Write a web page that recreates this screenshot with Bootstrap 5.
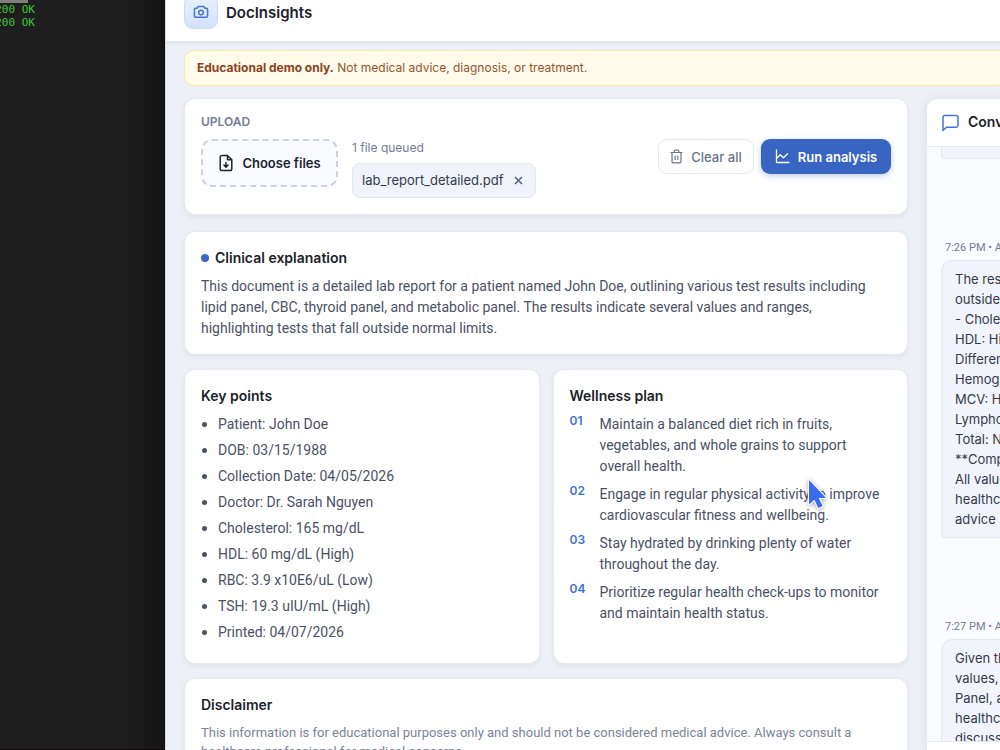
<!DOCTYPE html>
<html lang="en">
<head>
<meta charset="utf-8">
<meta name="viewport" content="width=device-width, initial-scale=1">
<title>DocInsights</title>
<link href="https://cdn.jsdelivr.net/npm/bootstrap@5.3.0/dist/css/bootstrap.min.css" rel="stylesheet">
<style>
  body { font-family: Inter, "Open Sans", sans-serif; font-size: 14px; line-height: 21px; color: #4a5164; background: #1e1e1e; }
  .panel .prose { font-family: Roboto, Inter, sans-serif; padding-right: 6px; }
  .terminal { width: 165px; background: linear-gradient(90deg, #1e1e1e 75%, #141414); font: 11px/13px "DejaVu Sans Mono", monospace; color: #3fc43f; border-bottom: 1px solid #0d0507; }
  .log-lines { width: 35px; margin-top: -10px; }
  .log-lines .picked { background: #7d7f7d; color: #a9b5a9; margin-right: 7px; }
  .app { background: #edf0f6; border-left: 1px solid #d5d7de; min-width: 0; }
  .topbar { height: 42px; padding: 0 18px 12px; background: #fff; border-bottom: 1px solid #dfe3eb; box-shadow: 0 1px 4px #1c2b500f; }
  .logo { width: 34px; height: 34px; border-radius: 9px; border: 1px solid #cbd9f3; background: linear-gradient(#e9f0fd, #d3e1fa); color: #4575cf; }
  .brand { font-size: 15px; line-height: 24px; font-weight: 600; color: #1c202b; padding-bottom: 4px; }
  .notice { margin: 8px 0 12px 18px; padding: 7px 12px; font-size: 12px; line-height: 20px; color: #95542f; background: #fffbea; border: 1px solid #f6e8ac; border-right: 0; border-radius: 10px 0 0 10px; }
  .notice strong { color: #8b4220; }
  .workspace { display: grid; grid-template-columns: minmax(0, 1fr) 74px; gap: 18px; padding-left: 18px; min-height: 0; }
  .stack { gap: 14px; min-height: 0; }
  .panel { flex: none; background: #fff; border: 1px solid #e6e9f0; border-radius: 11px; padding: 15px 16px; box-shadow: 0 2px 5px #23365c12; }
  .upload { padding-bottom: 16px; margin-bottom: 2px; }
  .panel h2 { font-size: 14px; line-height: 22px; font-weight: 600; color: #1b1f2a; margin: 0 0 7px; }
  .panel-pair { display: grid; grid-template-columns: 1fr 1fr; gap: 13px; }
  .eyebrow { font-size: 12px; line-height: 16px; font-weight: 600; color: #727c92; margin: 0 0 9px; }
  .choose { height: 48px; width: 137px; border: 2px dashed #ccd2df; border-radius: 11px; background: #f9fafd; color: #20232d; font-size: 13px; font-weight: 600; padding: 0; }
  .files { margin-left: 14px; }
  .queued { font-size: 12px; line-height: 18px; color: #727c92; margin-bottom: 6px; }
  .chip { height: 35px; padding: 0 12px 0 9px; gap: 10px; font-size: 13px; color: #343a4b; background: #f0f3fa; border: 1px solid #e3e7f0; border-radius: 8px; }
  .chip button { border: 0; padding: 0; background: none; color: #5f687e; line-height: 9px; }
  .act { height: 35px; border-radius: 9px; font-size: 13px; font-weight: 600; line-height: 20px; padding: 0; }
  .act-clear { width: 96px; border: 1px solid #e5e8ef; color: #6b758a; background: #fff; font-weight: 500; }
  .act-run { width: 130px; color: #fff; background: #3865c2; border: 0; box-shadow: 0 2px 6px #3865c255; }
  .actions { gap: 7px; }
  .titled { gap: 6px; }
  .dot { width: 8px; height: 8px; background: #3a68c7; }
  .facts { list-style: none; margin: 0; padding: 0; }
  .facts li { display: flex; align-items: center; gap: 11px; margin-bottom: 5px; }
  .facts li::before { content: ""; width: 5px; height: 5px; border-radius: 50%; background: #4a5164; margin-left: 1px; }
  .steps { list-style: none; margin: 0; padding: 0; }
  .steps li { display: grid; grid-template-columns: 18px 1fr; column-gap: 12px; margin-bottom: 7px; }
  .steps span { font-family: Inter, sans-serif; font-size: 12px; line-height: 14px; font-weight: 600; color: #3e72cf; }
  .pointer { left: 252px; top: 106px; filter: drop-shadow(0 1px 2px #1c2b5066); }
  .fine { font-size: 13px; line-height: 19px; color: #7b8498; }
  .chat { background: #fafbfe; border-left: 1px solid #e3e8f3; border-top: 1px solid #e6e9f0; border-radius: 11px 0 0 0; box-shadow: 0 0 8px #23365c14; min-height: 0; white-space: nowrap; }
  .chat-head { height: 48px; padding-left: 15px; gap: 9px; background: #fff; border-bottom: 1px solid #e6e9f0; color: #4474cf; flex: none; }
  .chat-head h2 { font-size: 14px; font-weight: 600; color: #1b1f2a; margin: 0; }
  .chat-log { padding-left: 14px; min-height: 0; }
  .bubble { background: #f1f4fa; border: 1px solid #e3e7ef; border-right: 0; border-radius: 12px 0 0 4px; padding: 8px 0 8px 13px; font-size: 13px; line-height: 20px; color: #343a4a; }
  .bubble-end { height: 12px; border-top: 0; border-radius: 0 0 0 4px; padding: 0; }
  .stamp { font-family: Roboto, sans-serif; font-size: 11px; line-height: 16px; color: #727c92; margin: 81px 0 4px; padding-left: 4px; }
  .composer { height: 9px; flex: none; background: #fff; border-top: 1px solid #e3e7ef; }
</style>
</head>
<body class="vh-100 overflow-hidden d-flex">
<aside class="terminal flex-shrink-0 overflow-hidden">
  <div class="log-lines d-flex flex-column">
    <div class="picked d-flex justify-content-end">OK</div>
    <div class="d-flex justify-content-end text-nowrap">200 OK</div>
    <div class="d-flex justify-content-end text-nowrap">200 OK</div>
  </div>
</aside>

<div class="app flex-grow-1 d-flex flex-column overflow-hidden">
  <header class="topbar d-flex align-items-end gap-2 flex-shrink-0">
    <div class="logo d-flex align-items-center justify-content-center flex-shrink-0">
      <svg width="16" height="16" viewBox="0 0 16 16" fill="none" stroke="currentColor" stroke-width="1.5" stroke-linejoin="round"><path d="M5.2 2.5h5.6l1 1.700h1.400c.8 0 1.400.6 1.400 1.400v6.300c0 .8-.6 1.400-1.400 1.400H2.800c-.8 0-1.400-.6-1.400-1.400V5.600c0-.8.6-1.400 1.400-1.400h1.400z"/><circle cx="8" cy="8.600" r="2.300"/></svg>
    </div>
    <div class="brand">DocInsights</div>
  </header>

  <div class="notice flex-shrink-0 text-nowrap"><strong class="fw-bold">Educational demo only.</strong> Not medical advice, diagnosis, or treatment.</div>

  <main class="workspace flex-grow-1">
    <div class="stack d-flex flex-column">
      <section class="panel upload">
        <h3 class="eyebrow">UPLOAD</h3>
        <div class="d-flex align-items-start">
          <button type="button" class="choose d-flex align-items-center justify-content-center gap-2">
            <svg width="16" height="18" viewBox="0 0 16 18" fill="none" stroke="currentColor" stroke-width="1.5" stroke-linecap="round" stroke-linejoin="round"><path d="M9.500 1.500H4A1.800 1.800 0 0 0 2.200 3.300v11.400A1.800 1.800 0 0 0 4 16.500h8a1.800 1.800 0 0 0 1.800-1.800V5.800zM9.500 1.500v4.300h4.300M8 8.500v4.500M6 11l2 2.200 2-2.200"/></svg>
            Choose files
          </button>
          <div class="files">
            <div class="queued">1 file queued</div>
            <div class="chip d-flex align-items-center">lab_report_detailed.pdf
              <button type="button" class="d-flex" aria-label="Remove file"><svg width="9" height="9" viewBox="0 0 9 9" stroke="currentColor" stroke-width="1.700"><path d="M1 1l7 7M8 1L1 8"/></svg></button>
            </div>
          </div>
          <div class="actions ms-auto d-flex">
            <button type="button" class="act act-clear d-flex align-items-center justify-content-center gap-2">
              <svg width="13" height="15" viewBox="0 0 13 15" fill="none" stroke="currentColor" stroke-width="1.200" stroke-linecap="round" stroke-linejoin="round"><path d="M1 3.500h11M4.200 3.500V2.200c0-.6.4-1 1-1h2.600c.6 0 1 .4 1 1v1.300M2 3.500v9c0 .8.500 1.300 1.300 1.300h6.400c.8 0 1.300-.5 1.300-1.300v-9M5.200 7v3.500M7.800 7v3.500"/></svg>
              Clear all
            </button>
            <button type="button" class="act act-run d-flex align-items-center justify-content-center gap-2">
              <svg width="15" height="15" viewBox="0 0 15 15" fill="none" stroke="currentColor" stroke-width="1.300" stroke-linecap="round" stroke-linejoin="round"><path d="M1.500 1v12.500H14M2.500 8.500L5.200 5.800 8.500 8.800 12.500 4.800"/></svg>
              Run analysis
            </button>
          </div>
        </div>
      </section>

      <section class="panel">
        <h2 class="titled d-flex align-items-center"><span class="dot rounded-circle"></span>Clinical explanation</h2>
        <p class="prose mb-0">This document is a detailed lab report for a patient named John Doe, outlining various test results including lipid panel, CBC, thyroid panel, and metabolic panel. The results indicate several values and ranges, highlighting tests that fall outside normal limits.</p>
      </section>

      <div class="panel-pair">
        <section class="panel">
          <h2>Key points</h2>
          <ul class="facts prose">
            <li>Patient: John Doe</li>
            <li>DOB: 03/15/1988</li>
            <li>Collection Date: 04/05/2026</li>
            <li>Doctor: Dr. Sarah Nguyen</li>
            <li>Cholesterol: 165 mg/dL</li>
            <li>HDL: 60 mg/dL (High)</li>
            <li>RBC: 3.9 x10E6/uL (Low)</li>
            <li>TSH: 19.3 uIU/mL (High)</li>
            <li>Printed: 04/07/2026</li>
          </ul>
        </section>
        <section class="panel position-relative">
          <h2>Wellness plan</h2>
          <ol class="steps prose">
            <li><span>01</span><div>Maintain a balanced diet rich in fruits, vegetables, and whole grains to support overall health.</div></li>
            <li><span>02</span><div>Engage in regular physical activity to improve cardiovascular fitness and wellbeing.</div></li>
            <li><span>03</span><div>Stay hydrated by drinking plenty of water throughout the day.</div></li>
            <li><span>04</span><div>Prioritize regular health check-ups to monitor and maintain health status.</div></li>
          </ol>
          <svg class="pointer position-absolute" width="24" height="36" viewBox="0 0 24 36"><path d="M3 4v24.500l5.300-4.800 4 8.300 4.400-2-4-8h7.300z" fill="#3b6cf0" stroke="#fff" stroke-width="2" stroke-linejoin="round" paint-order="stroke"/></svg>
        </section>
      </div>

      <section class="panel">
        <h2>Disclaimer</h2>
        <p class="fine prose mb-0">This information is for educational purposes only and should not be considered medical advice. Always consult a healthcare professional for medical concerns.</p>
      </section>
    </div>

    <aside class="chat d-flex flex-column overflow-hidden">
      <div class="chat-head d-flex align-items-center">
        <svg class="flex-shrink-0" width="17" height="18" viewBox="0 0 17 18" fill="none" stroke="currentColor" stroke-width="1.500" stroke-linejoin="round"><path d="M1 16.500V3.300C1 2.300 1.700 1.500 2.700 1.500h11.600c1 0 1.700.8 1.700 1.800v8.200c0 1-.7 1.700-1.700 1.700H4.500z"/></svg>
        <h2>Conversation</h2>
      </div>
      <div class="chat-log flex-grow-1 overflow-hidden">
        <div class="bubble bubble-end"></div>
        <div class="stamp">7:26 PM • As</div>
        <div class="bubble">The res<br>outside<br>- Chole<br>HDL: Hi<br>Differen<br>Hemog<br>MCV: H<br>Lympho<br>Total: N<br>**Comp<br>All value<br>healthca<br>advice</div>
        <div class="stamp">7:27 PM • As</div>
        <div class="bubble">Given th<br>values,<br>Panel, a<br>healthca<br>discuss</div>
      </div>
      <div class="composer"></div>
    </aside>
  </main>
</div>
<script src="https://cdn.jsdelivr.net/npm/bootstrap@5.3.0/dist/js/bootstrap.bundle.min.js"></script>
</body>
</html>
